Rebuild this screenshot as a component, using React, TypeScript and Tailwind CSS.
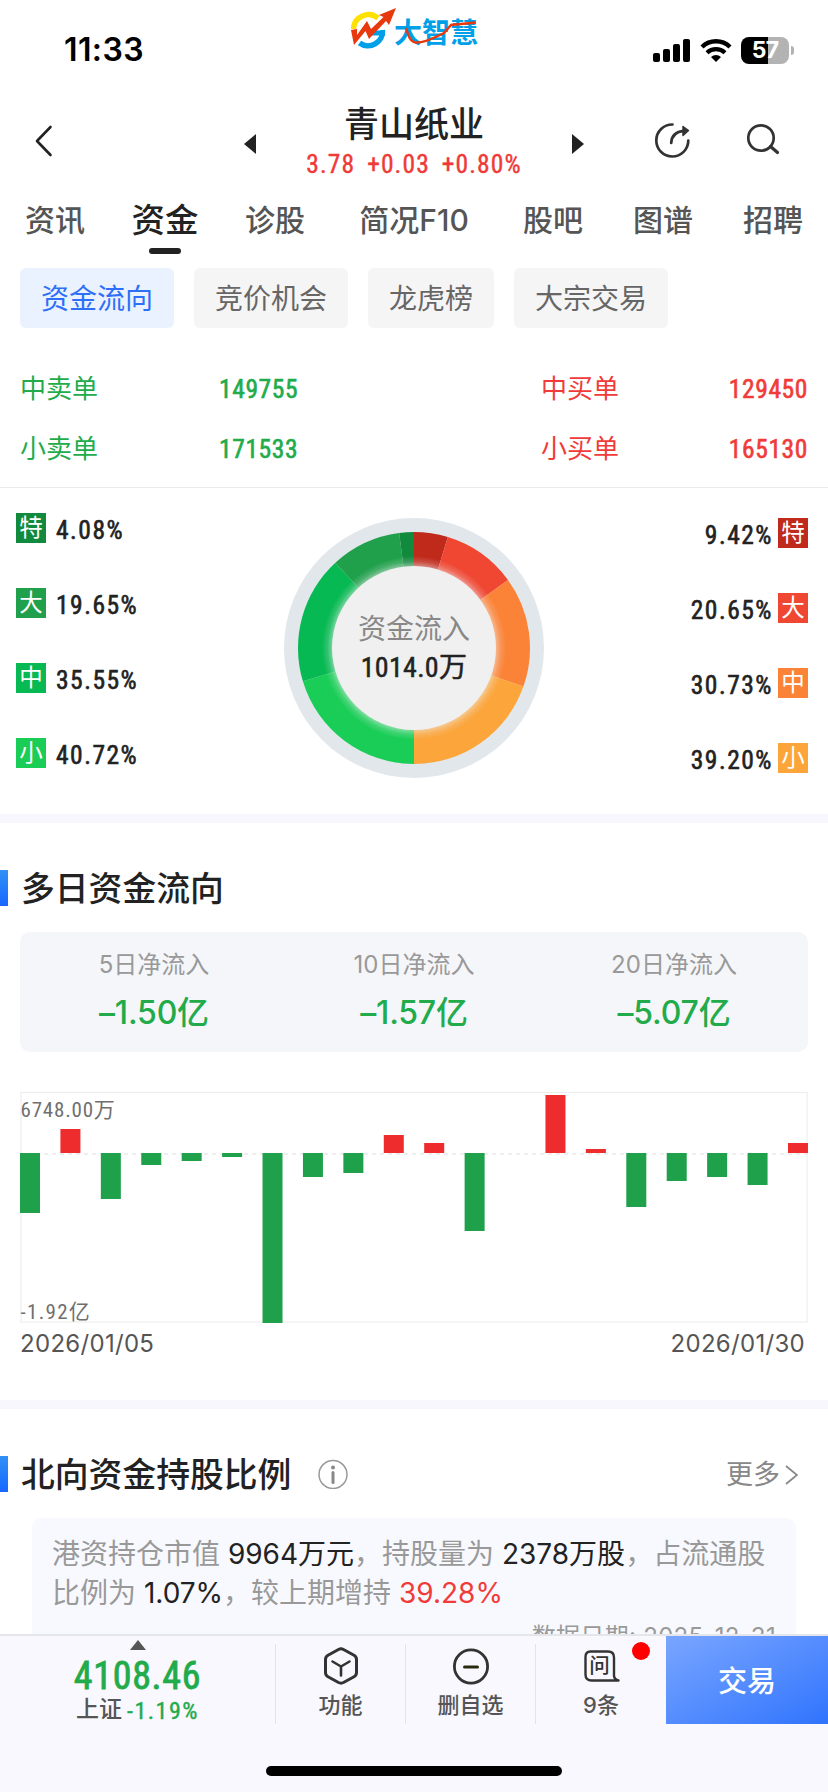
import React from "react";

const DIN = "font-['Roboto','Noto_Sans_CJK_SC',sans-serif] font-stretch-[75%] font-normal";

const tabs = [
  { label: "资讯" },
  { label: "资金", active: true },
  { label: "诊股" },
  { label: "简况F10", wide: true },
  { label: "股吧" },
  { label: "图谱" },
  { label: "招聘" },
];

const pills = ["资金流向", "竞价机会", "龙虎榜", "大宗交易"];

const orders = [
  { sell: "中卖单", sellValue: "149755", buy: "中买单", buyValue: "129450" },
  { sell: "小卖单", sellValue: "171533", buy: "小买单", buyValue: "165130" },
];

const outflow = [
  { tag: "特", value: 4.08, bg: "bg-[#128a3e]", color: "#128a3e" },
  { tag: "大", value: 19.65, bg: "bg-[#20a04b]", color: "#20a04b" },
  { tag: "中", value: 35.55, bg: "bg-[#07b953]", color: "#07b953" },
  { tag: "小", value: 40.72, bg: "bg-[#19cd56]", color: "#19cd56" },
];

const inflow = [
  { tag: "特", value: 9.42, bg: "bg-[#c02a1b]", color: "#c02a1b" },
  { tag: "大", value: 20.65, bg: "bg-[#f04733]", color: "#f04733" },
  { tag: "中", value: 30.73, bg: "bg-[#fb8337]", color: "#fb8337" },
  { tag: "小", value: 39.2, bg: "bg-[#fba53b]", color: "#fba53b" },
];

const totals = [
  { label: "5日净流入", value: "–1.50亿" },
  { label: "10日净流入", value: "–1.57亿" },
  { label: "20日净流入", value: "–5.07亿" },
];

const bars = [-60, 24, -46, -12, -8, -4, -170, -24, -20, 18, 10, -78, 0, 58, 4, -54, -28, -24, -32, 10];

function Logo() {
  return (
    <div className="relative flex h-[44px] w-[130px] items-center">
      <svg width="46" height="42" viewBox="0 0 46 42" fill="none">
        <path d="M2.5 21 A15 15 0 0 1 27 10" stroke="#ffe100" strokeWidth="5.5" />
        <path d="M31.5 22 A14.5 14.5 0 0 1 8.5 35" stroke="#00a0e9" strokeWidth="5.5" />
        <path d="M20 25 H34" stroke="#00a0e9" strokeWidth="5" />
        <path d="M0 22 L6 21 L6 27 L16 13 L20 21 L32.500 9 L28 7 L45 0 L38 17 L35 13 L18 31 L14.500 23 L3 37 Z" fill="#e8380d" />
      </svg>
      <span className="mt-[3px] ml-[-3px] font-['Noto_Sans_CJK_SC',sans-serif] text-[28px] leading-[30px] font-bold text-[#00a0e9]">大智慧</span>
      <svg className="absolute top-[11px] left-[54px]" width="72" height="30" viewBox="0 0 72 30" fill="none">
        <path d="M1 10 C3 17 5 24.500 12 24.500 C22 24.500 30 19 39 15 L46 7 L71 4.500" stroke="#e8380d" strokeWidth="2.400" />
      </svg>
    </div>
  );
}

function StatusBar() {
  return (
    <div className="flex h-[100px] shrink-0">
      <div className="flex w-[351px] pt-[30px] pl-[64px]">
        <span className="text-[32px] leading-[40px] font-semibold tracking-[0.400px] text-black">11:33</span>
      </div>
      <div className="w-[302px] pt-[7px]">
        <Logo />
      </div>
      <div className="mt-[34px] flex h-[32px] items-center">
        <svg width="37" height="23" viewBox="0 0 37 23" fill="black">
          <rect x="0" y="14" width="7" height="9" rx="2" />
          <rect x="10" y="10" width="7" height="13" rx="2" />
          <rect x="20" y="5" width="7" height="18" rx="2" />
          <rect x="30" y="0" width="7" height="23" rx="2" />
        </svg>
        <svg className="ml-[10px]" width="32" height="24" viewBox="0 0 32 24" fill="none">
          <path d="M2 9 A20 20 0 0 1 30 9" stroke="black" strokeWidth="4.400" />
          <path d="M7 14.800 A13 13 0 0 1 25 14.800" stroke="black" strokeWidth="4.200" />
          <path d="M16 24 L11 19 A7.500 7.500 0 0 1 21 19 Z" fill="black" />
        </svg>
        <div className="ml-[9px] flex h-[27px] w-[48px] items-center justify-center rounded-[8px] bg-[linear-gradient(90deg,#000_56%,#b3b3b3_56%)]">
          <span className="text-[23px] leading-[27px] font-bold tracking-[-0.8px] text-white">57</span>
        </div>
        <div className="ml-[2px] h-[9px] w-[3px] rounded-r-full bg-[#b3b3b3]" />
      </div>
    </div>
  );
}

function Header() {
  return (
    <div className="flex h-[90px] shrink-0">
      <div className="w-[244px] pt-[25px] pl-[35px]">
        <svg width="18" height="32" viewBox="0 0 18 32" fill="none">
          <path d="M15.500 2 L2 16 L15.500 30" stroke="#222" strokeWidth="2.600" strokeLinecap="round" strokeLinejoin="round" />
        </svg>
      </div>
      <div className="flex w-[340px] justify-between">
        <svg className="mt-[34px]" width="12" height="20" viewBox="0 0 12 20">
          <path d="M12 0 V20 L0 10 Z" fill="#222" />
        </svg>
        <div className="flex flex-col items-center">
          <div className="flex h-[48px] items-center text-[35px] leading-[48px] font-medium text-[#222]">青山纸业</div>
          <div className={`${DIN} flex h-[32px] items-center gap-[12px] text-[25.500px] leading-[32px] tracking-[1.100px] text-[#ef3a38] [-webkit-text-stroke:0.4px]`}>
            <span>3.78</span>
            <span>+0.03</span>
            <span>+0.80%</span>
          </div>
        </div>
        <svg className="mt-[34px]" width="12" height="20" viewBox="0 0 12 20">
          <path d="M0 0 V20 L12 10 Z" fill="#222" />
        </svg>
      </div>
      <svg className="mt-[22px] ml-[70px]" width="37" height="37" viewBox="0 0 37 37" fill="none" stroke="#333" strokeWidth="2.700" strokeLinecap="round">
        <path d="M18.500 2.500 A16 16 0 1 0 34.300 18.500" />
        <path d="M17.200 21 C17.500 14 22 9.500 30 8.800" />
        <path d="M29 4.500 L34.500 8.500 L29 13.500 Z" fill="#333" strokeWidth="1.500" strokeLinejoin="round" />
      </svg>
      <svg className="mt-[23px] ml-[56px]" width="33" height="33" viewBox="0 0 33 33" fill="none" stroke="#333" strokeWidth="2.700" strokeLinecap="round">
        <circle cx="14" cy="15" r="12.700" />
        <path d="M23.500 23.500 L30.500 29.500" strokeWidth="3.200" />
      </svg>
    </div>
  );
}

function Tabs() {
  return (
    <div className="flex h-[68px] shrink-0">
      {tabs.map((t) => (
        <div key={t.label} className={`flex flex-col items-center ${t.wide ? "w-[168px]" : "w-[110px]"}`}>
          <span
            className={`flex h-[58px] items-center pt-[2px] leading-[56px] font-medium whitespace-nowrap ${
              t.active ? "text-[33.500px] text-[#222]" : "text-[30px] text-[#555]"
            }`}
          >
            {t.label}
          </span>
          {t.active && <span className="h-[6px] w-[32px] rounded-full bg-[#222]" />}
        </div>
      ))}
    </div>
  );
}

function Pills() {
  return (
    <div className="flex h-[60px] shrink-0 gap-[20px] px-[20px]">
      {pills.map((p, i) => (
        <div
          key={p}
          className={`flex items-center rounded-[6px] px-[21px] pt-[2px] text-[28px] leading-[58px] ${
            i === 0 ? "bg-[#ebf2ff] text-[#2e6ff8]" : "bg-[#f5f5f5] text-[#666]"
          }`}
        >
          {p}
        </div>
      ))}
    </div>
  );
}

const ORDER_VALUE = "pb-[1px] text-[25.500px] tracking-[0.600px] [-webkit-text-stroke:0.6px]";

function Orders() {
  return (
    <div className="mt-[30px] h-[130px] shrink-0 border-b border-[#ebebeb] text-[26px] leading-[58px]">
      {orders.map((o) => (
        <div key={o.sell} className="flex h-[60px] items-center pt-[2px] pr-[20px] pl-[20px]">
          <span className="w-[199px] text-[#22ab4b]">{o.sell}</span>
          <span className={`${DIN} ${ORDER_VALUE} w-[322px] text-[#22ab4b]`}>{o.sellValue}</span>
          <span className="text-[#f03b39]">{o.buy}</span>
          <span className={`${DIN} ${ORDER_VALUE} ml-auto text-[#f03b39]`}>{o.buyValue}</span>
        </div>
      ))}
    </div>
  );
}

function polar(r: number, deg: number) {
  const a = ((deg - 90) * Math.PI) / 180;
  return `${(130 + r * Math.cos(a)).toFixed(2)} ${(130 + r * Math.sin(a)).toFixed(2)}`;
}

function slice(from: number, to: number) {
  return `M${polar(116, from)} A116 116 0 0 1 ${polar(116, to)} L${polar(80, to)} A80 80 0 0 0 ${polar(80, from)} Z`;
}

function Donut() {
  const parts: { d: string; color: string }[] = [];
  let a = 0;
  inflow.forEach((s) => {
    parts.push({ d: slice(a, a + s.value * 1.8), color: s.color });
    a += s.value * 1.8;
  });
  a = 180;
  [...outflow].reverse().forEach((s) => {
    parts.push({ d: slice(a, a + s.value * 1.8), color: s.color });
    a += s.value * 1.8;
  });
  return (
    <div className="grid h-[260px] w-[260px] place-items-center">
      <svg className="col-start-1 row-start-1" width="260" height="260" viewBox="0 0 260 260">
        <defs>
          <radialGradient id="glow" gradientUnits="userSpaceOnUse" cx="130" cy="130" r="92">
            <stop offset="0.890" stopColor="#f0f0f0" stopOpacity="0.480" />
            <stop offset="0.940" stopColor="#f0f0f0" stopOpacity="0.180" />
            <stop offset="1" stopColor="#f0f0f0" stopOpacity="0" />
          </radialGradient>
        </defs>
        <circle cx="130" cy="130" r="130" fill="#e2e7eb" />
        {parts.map((p) => (
          <path key={p.color} d={p.d} fill={p.color} />
        ))}
        <circle cx="130" cy="130" r="92" fill="url(#glow)" />
        <circle cx="130" cy="130" r="82" fill="#f0f0f0" />
      </svg>
      <div className="col-start-1 row-start-1 flex flex-col items-center">
        <span className="text-[28px] leading-[39px] text-[#888]">资金流入</span>
        <span className={`${DIN} text-[28px] leading-[38px] tracking-[0.300px] text-[#222] [-webkit-text-stroke:0.5px]`}>1014.0万</span>
      </div>
    </div>
  );
}

const LEGEND_VALUE = "pt-[4px] text-[25.500px] leading-[30px] tracking-[1.500px] text-[#222] [-webkit-text-stroke:0.6px]";
const LEGEND_TAG = "grid h-[30px] w-[30px] place-items-center text-[23.500px] leading-[30px] text-white";

function Flow() {
  return (
    <div className="flex h-[326px] shrink-0 justify-between">
      <div className="flex w-[268px] flex-col gap-[45px] pt-[25px] pl-[16px]">
        {outflow.map((s) => (
          <div key={s.tag} className="flex h-[30px] items-center gap-[10px]">
            <span className={`${LEGEND_TAG} ${s.bg}`}>{s.tag}</span>
            <span className={`${DIN} ${LEGEND_VALUE}`}>{s.value.toFixed(2)}%</span>
          </div>
        ))}
      </div>
      <div className="pt-[30px]">
        <Donut />
      </div>
      <div className="flex w-[268px] flex-col gap-[45px] pt-[30px] pr-[20px]">
        {inflow.map((s) => (
          <div key={s.tag} className="flex h-[30px] items-center justify-end gap-[5px]">
            <span className={`${DIN} ${LEGEND_VALUE}`}>{s.value.toFixed(2)}%</span>
            <span className={`${LEGEND_TAG} ${s.bg}`}>{s.tag}</span>
          </div>
        ))}
      </div>
    </div>
  );
}

function SectionTitle({ title, children }: { title: string; children?: React.ReactNode }) {
  return (
    <div className="flex h-[36px] shrink-0 items-center">
      <span className="h-[36px] w-[8px] bg-linear-to-b from-[#3191f4] to-[#1a66ff]" />
      <h2 className="ml-[13px] pt-[2px] text-[33.800px] leading-[36px] font-medium text-[#222]">{title}</h2>
      {children}
    </div>
  );
}

function FlowChart() {
  return (
    <div className="mx-[20px] mt-[40px] h-[231px] shrink-0">
      <svg width="788" height="231" viewBox="0 0 788 231">
        <path d="M0 0.500 H788" stroke="#ececec" />
        <path d="M1 1 V230 H787 V1" stroke="#f5f5f5" strokeWidth="2" fill="none" />
        <path d="M0 62 H788" stroke="#eeeeee" strokeWidth="2" strokeDasharray="4 4" />
        {bars.map((v, i) => (
          <rect key={i} x={i * 40.42} y={v > 0 ? 61 - v : 61} width="20" height={Math.abs(v)} fill={v > 0 ? "#ef2c2d" : "#1fa04a"} />
        ))}
        <g className={`${DIN} text-[21px] tracking-[0.800px]`} fill="#6f6f6f">
          <text x="0.500" y="25">6748.00万</text>
          <text className="tracking-[1.300px]" x="0.500" y="227">-1.92亿</text>
        </g>
      </svg>
    </div>
  );
}

function BottomBar() {
  return (
    <div className="h-[158px] shrink-0 border-t-2 border-[#e5e6e9] bg-[#f8f8fe]">
      <div className="flex h-[88px]">
        <div className="flex w-[275px] flex-col items-center pt-[4px]">
          <svg width="16" height="10" viewBox="0 0 16 10">
            <path d="M8 0 L16 10 H0 Z" fill="#555" />
          </svg>
          <div className={`${DIN} mt-[8px] text-[38px] leading-[36px] tracking-[0.700px] text-[#22ab4b] [-webkit-text-stroke:0.8px]`}>4108.46</div>
          <div className="mt-[2px] flex h-[26px] items-center gap-[5px] text-[23px] leading-[26px] font-medium text-[#555]">
            上证
            <span className={`${DIN} pt-[4px] text-[24px] leading-[22px] tracking-[1.500px] text-[#22ab4b] [-webkit-text-stroke:0.4px]`}>-1.19%</span>
          </div>
        </div>
        <div className="mt-[8px] flex w-[130px] flex-col items-center border-l border-[#e3e3e8] pt-[3px]">
          <svg width="36" height="38" viewBox="0 0 36 38" fill="none" stroke="#333" strokeWidth="3" strokeLinecap="round" strokeLinejoin="round">
            <path d="M15.500 2.500 Q18 1.200 20.500 2.500 L31 8.300 Q33.500 9.700 33.500 12.500 V25.500 Q33.500 28.300 31 29.700 L20.500 35.500 Q18 36.800 15.500 35.500 L5 29.700 Q2.500 28.300 2.500 25.500 V12.500 Q2.500 9.700 5 8.300 Z" />
            <path d="M9.500 14.500 L18 19.500 L26.500 14.500 M18 19.500 V28.500" strokeWidth="2.600" />
          </svg>
          <span className="mt-[4px] text-[22px] leading-[32px] font-medium text-[#555]">功能</span>
        </div>
        <div className="mt-[8px] flex w-[130px] flex-col items-center border-l border-[#e3e3e8] pt-[3px]">
          <svg width="38" height="38" viewBox="0 0 38 38" fill="none" stroke="#333" strokeLinecap="round">
            <circle cx="19" cy="19.500" r="16.600" strokeWidth="2.800" />
            <path d="M12.500 20 H25.500" strokeWidth="3" stroke="#2a2a10" />
          </svg>
          <span className="mt-[4px] text-[22px] leading-[32px] font-medium text-[#555]">删自选</span>
        </div>
        <div className="relative mt-[8px] flex w-[131px] flex-col items-center border-l border-[#e3e3e8] pt-[3px]">
          <div className="grid h-[38px] w-[38px] place-items-center">
            <svg className="col-start-1 row-start-1" width="38" height="38" viewBox="0 0 38 38" fill="none" stroke="#333" strokeWidth="2.400" strokeLinejoin="round">
              <path d="M8.500 4.500 H26 Q32 4.500 32 10.500 V29 Q32.500 32.500 36.500 33.500 H9.500 Q3.500 33.500 3.500 27.500 V10 Q3.500 4.500 8.500 4.500" />
            </svg>
            <span className="col-start-1 row-start-1 mr-[3px] text-[20.500px] leading-[38px] font-medium text-[#333]">问</span>
          </div>
          <span className="mt-[4px] text-[22px] leading-[32px] font-medium text-[#555]">9条</span>
          <span className="absolute top-[-2px] right-[16px] h-[18px] w-[18px] rounded-full bg-[#ff0000]" />
        </div>
        <div className="flex w-[162px] items-center justify-center bg-linear-to-br from-[#79a5ff] to-[#2f73fd] pt-[3px] text-[29px] leading-[85px] font-medium text-white">交易</div>
      </div>
      <div className="mt-[42px] flex justify-center">
        <div className="h-[10px] w-[296px] rounded-full bg-black" />
      </div>
    </div>
  );
}

export default function App() {
  return (
    <div className="flex h-[1792px] w-[828px] flex-col overflow-hidden bg-white font-['Inter','Noto_Sans_CJK_SC',sans-serif]">
      <StatusBar />
      <Header />
      <Tabs />
      <main className="mt-[10px] flex min-h-0 flex-1 flex-col overflow-hidden">
        <Pills />
        <Orders />
        <Flow />
        <div className="mb-[47px] h-[9px] shrink-0 bg-[#f7f7fd]" />
        <SectionTitle title="多日资金流向" />
        <div className="mx-[20px] mt-[26px] grid h-[120px] shrink-0 grid-cols-3 rounded-[10px] bg-[#f5f6fa] px-[4px]">
          {totals.map((t) => (
            <div key={t.label} className="flex flex-col items-center pt-[15px]">
              <span className="text-[24px] leading-[36px] text-[#999]">{t.label}</span>
              <span className="mt-[7px] text-[32px] leading-[46px] font-medium tracking-[-0.2px] text-[#22ab4b]">{t.value}</span>
            </div>
          ))}
        </div>
        <FlowChart />
        <div className="mx-[20px] flex h-[77px] shrink-0 justify-between pt-[1px] pr-[3px] text-[24px] leading-[40px] tracking-[0.300px] text-[#555]">
          <span>2026/01/05</span>
          <span>2026/01/30</span>
        </div>
        <div className="mb-[47px] h-[9px] shrink-0 bg-[#f7f7fd]" />
        <SectionTitle title="北向资金持股比例">
          <svg className="ml-[27px]" width="30" height="30" viewBox="0 0 30 30" fill="none">
            <circle cx="15" cy="15.500" r="14" stroke="#999" strokeWidth="1.500" />
            <circle cx="15" cy="8.500" r="2" fill="#888" />
            <path d="M15 13.500 V23.500" stroke="#888" strokeWidth="3" strokeLinecap="round" />
          </svg>
          <span className="ml-auto flex items-center gap-[5px] pt-[2px] pr-[30px] text-[27px] leading-[36px] text-[#888]">
            更多
            <svg width="13" height="20" viewBox="0 0 13 20" fill="none">
              <path d="M1 1 L12 10 L1 19" stroke="#888" strokeWidth="1.800" />
            </svg>
          </span>
        </SectionTitle>
        <div className="mx-[32px] mt-[26px] flex shrink-0 flex-col rounded-[10px] bg-[#f8f9fe] px-[20px] pt-[17px] pb-[20px] text-[28px] leading-[39px] text-[#999]">
          <p className="whitespace-nowrap">
            港资持仓市值 <span className="text-[#222]">9964万元</span>，持股量为 <span className="text-[#222]">2378万股</span>，占流通股
          </p>
          <p className="whitespace-nowrap">
            比例为 <span className="text-[#222]">1.07%</span>，较上期增持 <span className="text-[#f03b39]">39.28%</span>
          </p>
          <p className="mt-[4px] text-right text-[24px] leading-[39px] tracking-[0.300px]">数据日期: 2025-12-31</p>
        </div>
      </main>
      <BottomBar />
    </div>
  );
}
